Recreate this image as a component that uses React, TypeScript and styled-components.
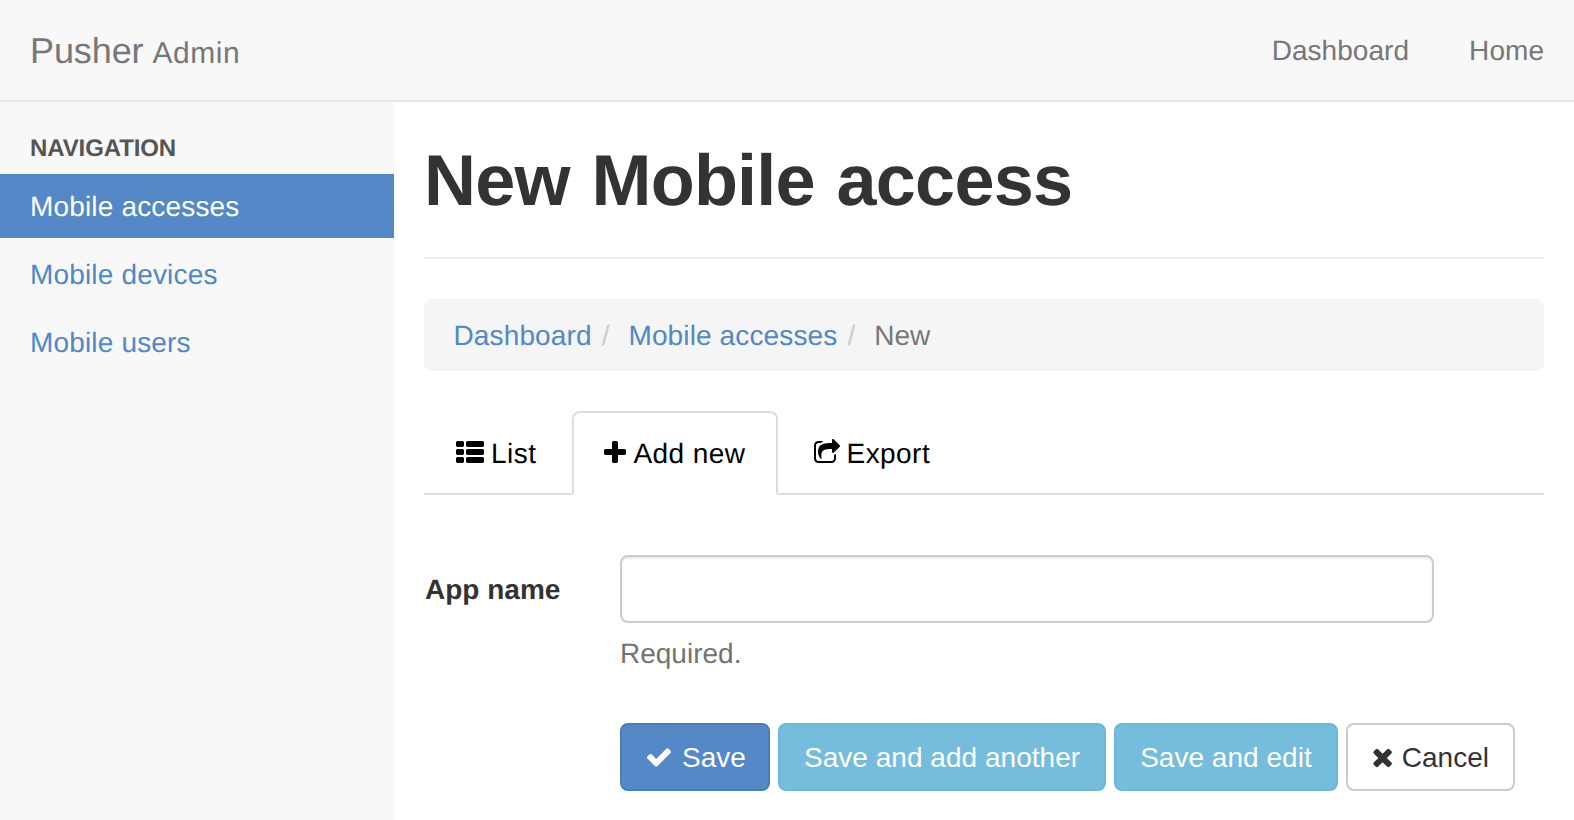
import React from "react";
import styled, { createGlobalStyle } from "styled-components";

const Global = createGlobalStyle`
  html, body { margin: 0; padding: 0; background: #fff; }
  body {
    font-family: "Liberation Sans", Arial, sans-serif; font-size: 28px; line-height: 40px; color: #333;
    text-rendering: geometricPrecision;
  }
  * { box-sizing: border-box; }
`;
const Page = styled.div`height: 820px; overflow: hidden; display: flex; flex-direction: column;`;
const Navbar = styled.header`
  height: 102px; flex: none; background: #f8f8f8; border-bottom: 2px solid #e7e7e7;
  display: flex; justify-content: space-between; align-items: flex-start; padding: 0 30px;
`;
const Brand = styled.a`font-size: 36px; line-height: 40px; color: #777; padding: 31px 0 29px; letter-spacing: -0.1px;`;
const BrandSub = styled.small`font-size: 30px; margin-left: -1px; letter-spacing: 0.6px;`;
const TopNav = styled.nav`display: flex; gap: 60px;`;
const TopLink = styled.a`color: #777; padding: 31px 0 29px; letter-spacing: 0.05px;`;
const Body = styled.div`flex: 1; display: flex; min-height: 0;`;
const Sidebar = styled.aside`width: 394px; flex: none; background: #f8f8f8; padding-top: 27px;`;
const NavHeader = styled.div`
  padding: 0 30px; height: 45px; font-size: 24px; line-height: 40px; font-weight: bold; color: #555; text-transform: uppercase; letter-spacing: -0.1px;
`;
const SideList = styled.ul`list-style: none; margin: 0; padding: 0; display: flex; flex-direction: column; gap: 4px;`;
const SideLink = styled.a<{ $active?: boolean }>`
  display: block; padding: 13px 30px 11px; letter-spacing: 0.17px;
  color: ${p => (p.$active ? "#fff" : "#5088c9")}; background: ${p => (p.$active ? "#5588c7" : "transparent")};
`;
const Main = styled.main`flex: 1; min-width: 0; padding: 0 30px;`;
const PageHeader = styled.div`margin-top: 40px; padding-bottom: 36px; border-bottom: 2px solid #eee; margin-bottom: 40px;`;
const Title = styled.h1`
  margin: 0; font-size: 72px; line-height: 79px; font-weight: bold; color: #333; letter-spacing: -0.77px; word-spacing: 2.5px;
`;
const Breadcrumb = styled.ol`
  list-style: none; margin: 0 0 40px; padding: 17px 30px 15px 29.5px; background: #f5f5f5; border-radius: 8px; display: flex;
`;
const Crumb = styled.li`color: #777;`;
const CrumbLink = styled.a`color: #5088c9; letter-spacing: 0.13px;`;
const Sep = styled.span`color: #ccc; padding: 0 10px; margin-right: 9px;`;
const Tabs = styled.div`display: flex; border-bottom: 2px solid #ddd; height: 84px;`;
const Tab = styled.a<{ $active?: boolean }>`
  height: 84px; padding: 21px 30px 19px; margin-right: 4px; color: #000; display: flex; align-items: center; gap: 7px; letter-spacing: 0.45px;
  border: 2px solid ${p => (p.$active ? "#ddd" : "transparent")}; border-bottom-color: ${p => (p.$active ? "#fff" : "transparent")};
  border-radius: 8px 8px 0 0; background: ${p => (p.$active ? "#fff" : "transparent")};
  svg { margin-top: -2px; }
`;
const Form = styled.form`padding-top: 60px;`;
const Row = styled.div`display: flex;`;
const Label = styled.label`width: 196px; flex: none; font-weight: bold; padding: 15px 0 0 1px; color: #333;`;
const Field = styled.div`width: 814px;`;
const Input = styled.input`
  display: block; width: 100%; height: 68px; border: 2px solid #ccc; border-radius: 8px; background: #fff;
  box-shadow: inset 0 2px 2px rgba(0,0,0,.075); font: inherit; padding: 12px 24px;
`;
const Help = styled.p`margin: 11px 0 0; color: #737373;`;
const Actions = styled.div`display: flex; gap: 8px; margin-top: 49px; margin-left: 196px;`;
const Btn = styled.button<{ $kind: "primary" | "info" | "default"; $gap?: number; $right?: number }>`
  height: 68px; padding: 2px ${p => p.$right ?? 24}px 0 24px; border-radius: 8px; font: inherit; letter-spacing: 0.03px;
  display: flex; align-items: center; gap: ${p => p.$gap ?? 10}px;
  border: 2px solid ${p => ({ primary: "#4a7db8", info: "#6cb8d6", default: "#ccc" }[p.$kind])};
  background: ${p => ({ primary: "#5588c7", info: "#76bcdc", default: "#fff" }[p.$kind])};
  color: ${p => (p.$kind === "default" ? "#333" : "#fff")};
  svg { margin: -3px 0 0 1px; }
`;
const IconSvg = styled.svg<{ $w: number; $h?: number }>`
  width: ${p => p.$w}px; height: ${p => p.$h ?? 28}px; flex: none; fill: currentColor; display: block;
`;

const ThListIcon = () => (
  <IconSvg $w={28} viewBox="0 0 1792 1792"><path d="M512 1248v192q0 40-28 68t-68 28h-320q-40 0-68-28t-28-68v-192q0-40 28-68t68-28h320q40 0 68 28t28 68zm0-512v192q0 40-28 68t-68 28h-320q-40 0-68-28t-28-68v-192q0-40 28-68t68-28h320q40 0 68 28t28 68zm1280 512v192q0 40-28 68t-68 28h-960q-40 0-68-28t-28-68v-192q0-40 28-68t68-28h960q40 0 68 28t28 68zm-1280-1024v192q0 40-28 68t-68 28h-320q-40 0-68-28t-28-68v-192q0-40 28-68t68-28h320q40 0 68 28t28 68zm1280 512v192q0 40-28 68t-68 28h-960q-40 0-68-28t-28-68v-192q0-40 28-68t68-28h960q40 0 68 28t28 68zm0-512v192q0 40-28 68t-68 28h-960q-40 0-68-28t-28-68v-192q0-40 28-68t68-28h960q40 0 68 28t28 68z" /></IconSvg>
);
const PlusIcon = () => (
  <IconSvg $w={22} viewBox="192 0 1408 1792"><path d="M1600 736v192q0 40-28 68t-68 28h-416v416q0 40-28 68t-68 28h-192q-40 0-68-28t-28-68v-416h-416q-40 0-68-28t-28-68v-192q0-40 28-68t68-28h416v-416q0-40 28-68t68-28h192q40 0 68 28t28 68v416h416q40 0 68 28t28 68z" /></IconSvg>
);
const ShareIcon = () => (
  <IconSvg $w={26} viewBox="64 0 1664 1792"><path d="M1472 989v259q0 119-84.5 203.5t-203.5 84.5h-832q-119 0-203.5-84.5t-84.5-203.5v-832q0-119 84.5-203.5t203.5-84.5h255q13 0 22.5 9.5t9.5 22.5q0 27-26 32-77 26-133 60-10 4-16 4h-112q-66 0-113 47t-47 113v832q0 66 47 113t113 47h832q66 0 113-47t47-113v-214q0-19 18-29 28-13 54-37 16-16 35-8 21 9 21 29zm237-496l-384 384q-18 19-45 19-12 0-25-5-39-17-39-59v-192h-160q-323 0-438 131-119 137-74 473 3 23-20 34-8 2-12 2-16 0-26-13-10-14-21-31t-39.5-68.5-49.5-99.5-38.5-114-17.5-122q0-49 3.5-91t14-90 28-88 47-81.5 68.5-74 94.5-61.5 124.5-48.5 159.5-30.5 196.5-11h160v-192q0-42 39-59 13-5 25-5 26 0 45 19l384 384q19 19 19 45t-19 45z" /></IconSvg>
);
const CheckIcon = () => (
  <IconSvg $w={24} viewBox="121 0 1550 1792"><path d="M1671 566q0 40-28 68l-724 724-136 136q-28 28-68 28t-68-28l-136-136-362-362q-28-28-28-68t28-68l136-136q28-28 68-28t68 28l294 295 656-657q28-28 68-28t68 28l136 136q28 28 28 68z" /></IconSvg>
);
const TimesIcon = () => (
  <IconSvg $w={19} viewBox="98 0 1200 1792"><path d="M1298 1322q0 40-28 68l-136 136q-28 28-68 28t-68-28l-294-294-294 294q-28 28-68 28t-68-28l-136-136q-28-28-28-68t28-68l294-294-294-294q-28-28-28-68t28-68l136-136q28-28 68-28t68 28l294 294 294-294q28-28 68-28t68 28l136 136q28 28 28 68t-28 68l-294 294 294 294q28 28 28 68z" /></IconSvg>
);

export default function App() {
  return (
    <Page>
      <Global />
      <Navbar>
        <Brand>Pusher <BrandSub>Admin</BrandSub></Brand>
        <TopNav>
          <TopLink>Dashboard</TopLink>
          <TopLink>Home</TopLink>
        </TopNav>
      </Navbar>
      <Body>
        <Sidebar>
          <NavHeader>Navigation</NavHeader>
          <SideList>
            <li><SideLink $active>Mobile accesses</SideLink></li>
            <li><SideLink>Mobile devices</SideLink></li>
            <li><SideLink>Mobile users</SideLink></li>
          </SideList>
        </Sidebar>
        <Main>
          <PageHeader><Title>New Mobile access</Title></PageHeader>
          <Breadcrumb>
            <Crumb><CrumbLink>Dashboard</CrumbLink><Sep>/</Sep></Crumb>
            <Crumb><CrumbLink>Mobile accesses</CrumbLink><Sep>/</Sep></Crumb>
            <Crumb>New</Crumb>
          </Breadcrumb>
          <Tabs>
            <Tab><ThListIcon /> List</Tab>
            <Tab $active><PlusIcon /> Add new</Tab>
            <Tab><ShareIcon /> Export</Tab>
          </Tabs>
          <Form>
            <Row>
              <Label>App name</Label>
              <Field>
                <Input type="text" />
                <Help>Required.</Help>
              </Field>
            </Row>
            <Actions>
              <Btn $kind="primary" $gap={11} $right={22} type="button"><CheckIcon /> Save</Btn>
              <Btn $kind="info" type="button">Save and add another</Btn>
              <Btn $kind="info" type="button">Save and edit</Btn>
              <Btn $kind="default" type="button"><TimesIcon /> Cancel</Btn>
            </Actions>
          </Form>
        </Main>
      </Body>
    </Page>
  );
}
